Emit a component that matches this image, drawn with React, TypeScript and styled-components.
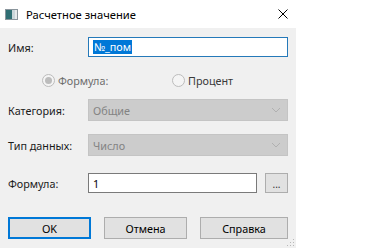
import styled, { createGlobalStyle } from "styled-components";

const GlobalStyle = createGlobalStyle`
	html, body {
		margin: 0;
		padding: 0;
		background: #ffffff;
		font-family: "Noto Sans", "Open Sans", sans-serif;
	}
`;

const Window = styled.div`
	width: 296px;
	height: 248px;
	display: flex;
	flex-direction: column;
`;

const TitleBar = styled.div`
	height: 28px;
	background: #ffffff;
	display: flex;
	align-items: center;
	padding: 0 8px 0 5px;
	gap: 8px;
	font-size: 11.2px;
	color: #000000;
`;

const TitleText = styled.span`
	flex: 1;
	padding-top: 1px;
`;

const Close = styled.div`
	width: 10px;
	height: 10px;
	display: flex;
	align-items: center;
	justify-content: center;
	margin-top: -1px;
`;

const Body = styled.div`
	flex: 1;
	background: #f0f0f0;
	padding: 0 8px;
	display: flex;
	flex-direction: column;
	position: relative;
	font-size: 10.8px;
`;

const Row = styled.div<{ $top: number; $h: number }>`
	margin-top: ${(p) => p.$top}px;
	height: ${(p) => p.$h}px;
	display: grid;
	grid-template-columns: 80px 1fr;
	align-items: center;
`;

const Label = styled.span`
	color: #1a1a1a;
`;

const TextInput = styled.div<{ $focused?: boolean }>`
	height: 100%;
	box-sizing: border-box;
	background: #ffffff;
	border: 1px solid ${(p) => (p.$focused ? "#2579b9" : "#7a7a7a")};
	display: flex;
	align-items: center;
	padding-left: 4px;
	color: #000000;
`;

const Selected = styled.span`
	background: #0078d7;
	color: #ffffff;
	padding: 0 1px;
	line-height: 14px;
`;

const Select = styled.div`
	height: 100%;
	box-sizing: border-box;
	background: #cccccc;
	border: 1px solid #c4c4c4;
	display: flex;
	align-items: center;
	justify-content: space-between;
	padding: 0 6px 0 4px;
	color: #838383;
`;

const RadioRow = styled.div<{ $top: number }>`
	margin-top: ${(p) => p.$top}px;
	height: 20px;
	display: flex;
	align-items: center;
	padding-left: 34px;
`;

const RadioItem = styled.div<{ $width: number; $color: string }>`
	width: ${(p) => p.$width}px;
	display: flex;
	align-items: center;
	gap: 3px;
	color: ${(p) => p.$color};
`;

const RadioCircle = styled.span<{ $checked?: boolean }>`
	width: 13px;
	height: 13px;
	box-sizing: border-box;
	border-radius: 50%;
	border: 1px solid #bcbcbc;
	background: #f4f4f4;
	display: flex;
	align-items: center;
	justify-content: center;
	&::after {
		content: "";
		width: 7px;
		height: 7px;
		border-radius: 50%;
		background: ${(p) => (p.$checked ? "#bcbcbc" : "transparent")};
	}
`;

const FormulaField = styled.div`
	display: flex;
	gap: 8px;
	height: 100%;
`;

const FormulaInput = styled(TextInput)`
	flex: 1;
`;

const DotsButton = styled.div`
	width: 23px;
	height: 20px;
	box-sizing: border-box;
	background: #e1e1e1;
	border: 1px solid #adadad;
	display: flex;
	align-items: center;
	justify-content: center;
	font-size: 10px;
	line-height: 1;
	padding-top: 2px;
	color: #333333;
`;

const Buttons = styled.div`
	margin-top: 24px;
	display: flex;
	justify-content: space-between;
`;

const Button = styled.div<{ $width: number; $default?: boolean }>`
	width: ${(p) => p.$width}px;
	height: 22px;
	box-sizing: border-box;
	background: #e1e1e1;
	border: ${(p) => (p.$default ? "2px solid #0078d7" : "1px solid #adadad")};
	display: flex;
	align-items: center;
	justify-content: center;
	color: #000000;
`;

const Grip = styled.div`
	position: absolute;
	right: 2px;
	bottom: 2px;
	width: 8px;
	height: 8px;
	background-image: radial-gradient(circle, #b8b8b8 0.8px, transparent 1px);
	background-size: 3px 3px;
	clip-path: polygon(100% 0, 100% 100%, 0 100%);
`;

function AppIcon() {
	return (
		<svg width="13" height="11" viewBox="0 0 13 11">
			<rect x="0.5" y="0.5" width="12" height="10" fill="#e6eaec" stroke="#8a959c" />
			<rect x="1" y="1" width="6" height="9" fill="#2f6f74" />
			<rect x="7" y="1" width="3" height="9" fill="#c9d6da" />
		</svg>
	);
}

function Chevron() {
	return (
		<svg width="10" height="6" viewBox="0 0 10 6">
			<path d="M1 1 L5 5 L9 1" fill="none" stroke="#b0b0b0" strokeWidth="1" />
		</svg>
	);
}

export default function App() {
	return (
		<>
			<GlobalStyle />
			<Window>
				<TitleBar>
					<AppIcon />
					<TitleText>Расчетное значение</TitleText>
					<Close>
						<svg width="10" height="10" viewBox="0 0 10 10">
							<path d="M0.5 0.5 L9.5 9.5 M9.5 0.5 L0.5 9.5" stroke="#000" strokeWidth="1" />
						</svg>
					</Close>
				</TitleBar>
				<Body>
					<Row $top={9} $h={20}>
						<Label>Имя:</Label>
						<TextInput $focused>
							<Selected>№_пом</Selected>
						</TextInput>
					</Row>
					<RadioRow $top={13}>
						<RadioItem $width={130} $color="#6d6d6d">
							<RadioCircle $checked />
							Формула:
						</RadioItem>
						<RadioItem $width={80} $color="#3a3a3a">
							<RadioCircle />
							Процент
						</RadioItem>
					</RadioRow>
					<Row $top={9} $h={22}>
						<Label>Категория:</Label>
						<Select>
							Общие
							<Chevron />
						</Select>
					</Row>
					<Row $top={13} $h={22}>
						<Label>Тип данных:</Label>
						<Select>
							Число
							<Chevron />
						</Select>
					</Row>
					<Row $top={17} $h={20}>
						<Label>Формула:</Label>
						<FormulaField>
							<FormulaInput>1</FormulaInput>
							<DotsButton>...</DotsButton>
						</FormulaField>
					</Row>
					<Buttons>
						<Button $width={83} $default>OK</Button>
						<Button $width={83}>Отмена</Button>
						<Button $width={88}>Справка</Button>
					</Buttons>
					<Grip />
				</Body>
			</Window>
		</>
	);
}
